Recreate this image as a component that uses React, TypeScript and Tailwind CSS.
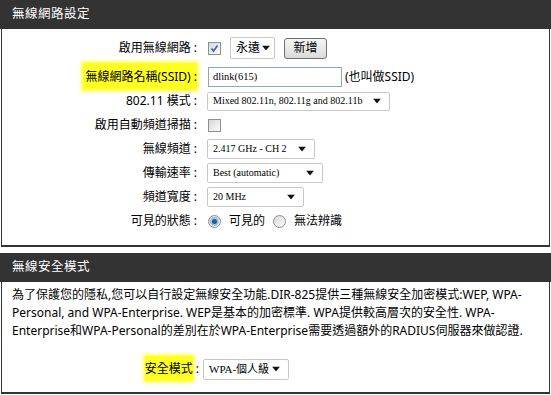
import React from 'react';

const sans = "font-['Noto_Sans','Noto_Sans_CJK_TC',sans-serif]";

const Arrow = ({ right }: { right: string }) => (
  <svg width="8" height="5" viewBox="0 0 8 5" className={`absolute top-1/2 -translate-y-1/2 ${right}`}>
    <path d="M0 0 H8 L4 5 Z" fill="#111" />
  </svg>
);

const Select = ({
  className,
  children,
  arrow = 'right-[8px]',
}: {
  className: string;
  children: React.ReactNode;
  arrow?: string;
}) => (
  <div
    className={`relative flex items-center rounded-[2px] border border-[#c8c8c8] bg-white pl-[5px] font-['Liberation_Serif','Noto_Sans_CJK_TC',serif] text-[10px] leading-none text-black ${className}`}
  >
    <span className="whitespace-nowrap">{children}</span>
    <Arrow right={arrow} />
  </div>
);

const Checkbox = ({ checked }: { checked?: boolean }) => (
  <div className="relative h-[13px] w-[13px] border border-[#8e8f8f] bg-gradient-to-br from-[#d8d8d8] to-[#fbfbfb]">
    {checked && (
      <svg width="11" height="11" viewBox="0 0 11 11" className="absolute left-0 top-0">
        <path d="M2.5 5.5 L4.5 8 L8.5 2.5" stroke="#4a64a0" strokeWidth="1.7" fill="none" />
      </svg>
    )}
  </div>
);

const Radio = ({ checked }: { checked?: boolean }) => (
  <div className="flex h-[13px] w-[13px] items-center justify-center rounded-full border border-[#8e8f8f] bg-gradient-to-br from-[#d8d8d8] to-[#fbfbfb]">
    {checked && <div className="h-[5px] w-[5px] rounded-full bg-[#1f5f9e] ring-2 ring-[#9cc3e6]" />}
  </div>
);

const Row = ({ label, children, className }: { label: React.ReactNode; children: React.ReactNode; className?: string }) => (
  <div className={`flex h-[24px] items-center ${className ?? ''}`}>
    <div className="w-[195px] shrink-0 whitespace-nowrap text-right">{label}</div>
    <div className="ml-[11px] flex items-center">{children}</div>
  </div>
);

const Header = ({ title }: { title: string }) => (
  <div className="flex h-[29px] items-center bg-[#333333] pl-[12px] text-[12.5px] tracking-[0.5px] text-white">
    {title}
  </div>
);

export default function App() {
  return (
    <div className={`h-[395px] w-[551px] overflow-hidden bg-white text-[12px] leading-none text-black ${sans}`}>
      <Header title="無線網路設定" />
      <div className="mx-[1px] h-[218px] border-x border-b-2 border-[#333333] pt-[7px]">
        <Row label="啟用無線網路 :">
          <Checkbox checked />
          <Select className="ml-[9px] h-[22px] w-[45px]" arrow="right-[4px]">
            <span className={`${sans} text-[12px]`}>永遠</span>
          </Select>
          <button className="ml-[9px] h-[21px] w-[43px] rounded-[3px] border border-[#707070] bg-gradient-to-b from-[#f6f6f6] to-[#dadada] text-[12px] leading-none">
            新增
          </button>
        </Row>
        <Row
          className="mt-[5px]"
          label={<span className="bg-[#ffff22] py-[5px] pl-[2px] shadow-[0_0_3px_2px_#ffff66]">無線網路名稱(SSID) :</span>}
        >
          <div className="flex h-[20px] w-[134px] items-center border border-[#8fa7c1] bg-white pl-[4px] font-['Liberation_Serif',serif] text-[10.5px]">
            dlink(615)
          </div>
          <span className="ml-[3px]">(也叫做SSID)</span>
        </Row>
        <Row label="802.11 模式 :">
          <Select className="-ml-[1px] h-[19px] w-[183px]">Mixed 802.11n, 802.11g and 802.11b</Select>
        </Row>
        <Row label="啟用自動頻道掃描 :">
          <Checkbox />
        </Row>
        <Row label="無線頻道 :">
          <Select className="-ml-[1px] h-[20px] w-[108px]">2.417 GHz - CH 2</Select>
        </Row>
        <Row label="傳輸速率 :">
          <Select className="-ml-[1px] h-[20px] w-[116px]">Best (automatic)</Select>
        </Row>
        <Row label="頻道寬度 :">
          <Select className="-ml-[1px] h-[20px] w-[97px]">20 MHz</Select>
        </Row>
        <Row label="可見的狀態 :">
          <Radio checked />
          <span className="ml-[8px]">可見的</span>
          <div className="ml-[8px]">
            <Radio />
          </div>
          <span className="ml-[8px]">無法辨識</span>
        </Row>
      </div>

      <div className="h-[6px]" />
      <Header title="無線安全模式" />
      <div className="mx-[1px] h-[112px] border-x border-b-2 border-[#333333] pt-[4px]">
        <p className="whitespace-nowrap pl-[10px] text-[12px] leading-[18px]">
          為了保護您的隱私,您可以自行設定無線安全功能.DIR-825提供三種無線安全加密模式:WEP, WPA-
          <br />
          Personal, and WPA-Enterprise. WEP是基本的加密標準. WPA提供較高層次的安全性. WPA-
          <br />
          Enterprise和WPA-Personal的差別在於WPA-Enterprise需要透過額外的RADIUS伺服器來做認證.
        </p>
        <div className="mt-[17px] flex h-[24px] items-center">
          <div className="w-[197px] shrink-0 whitespace-nowrap text-right">
            <span className="bg-[#ffff22] py-[4px] shadow-[0_0_3px_2px_#ffff66]">安全模式</span> :
          </div>
          <Select className="ml-[4px] h-[21px] w-[86px] text-[11px]">WPA-個人級</Select>
        </div>
      </div>
    </div>
  );
}
